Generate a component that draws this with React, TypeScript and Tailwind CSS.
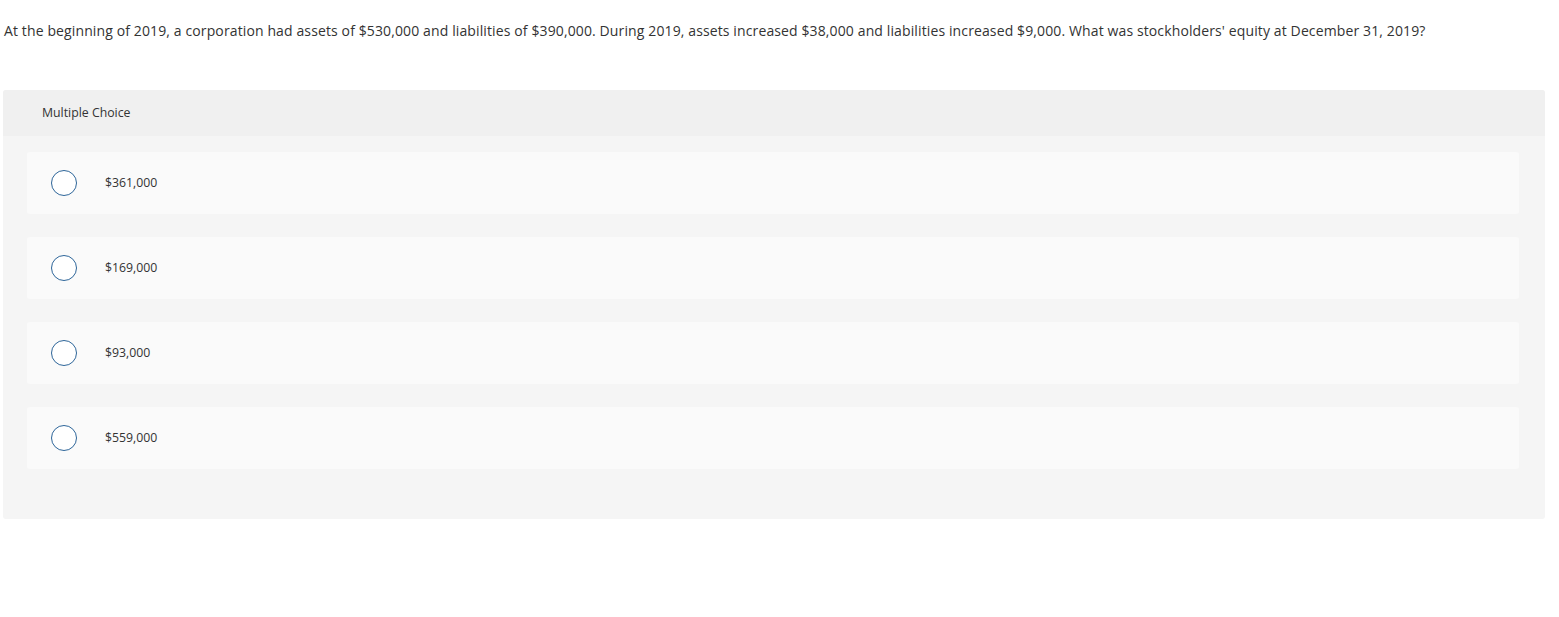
import React from 'react';

const choices = ['$361,000', '$169,000', '$93,000', '$559,000'];

export default function App() {
  return (
    <div className="min-h-screen bg-white text-[#333333]" style={{ fontFamily: '"Open Sans", "Liberation Sans", Arial, sans-serif' }}>
      <div className="pt-[22px] pl-[4px] pr-[10px]">
        <p className="text-[14px] leading-[18px] tracking-[0.12px]">
          At the beginning of 2019, a corporation had assets of $530,000 and liabilities of $390,000. During 2019, assets increased $38,000 and liabilities increased $9,000. What was stockholders' equity at December 31, 2019?
        </p>
      </div>

      <div className="mt-[50px] ml-[3px] mr-[14px] rounded-[3px] overflow-hidden bg-[#f5f5f5]">
        <div className="h-[46px] bg-[#f0f0f0] flex items-center pl-[39px]">
          <span className="text-[12.3px] text-[#333333]">Multiple Choice</span>
        </div>
        <div className="pt-[16px] pb-[50px] pl-[24px] pr-[26px] flex flex-col gap-[23px]">
          {choices.map((c) => (
            <div key={c} className="h-[62px] rounded-[3px] bg-[#fafafa] flex items-center">
              <span className="ml-[24px] w-[26px] h-[26px] rounded-full border-[1.5px] border-[#2d6599] bg-white shrink-0" />
              <span className="ml-[28px] text-[12.3px]">{c}</span>
            </div>
          ))}
        </div>
      </div>
    </div>
  );
}
